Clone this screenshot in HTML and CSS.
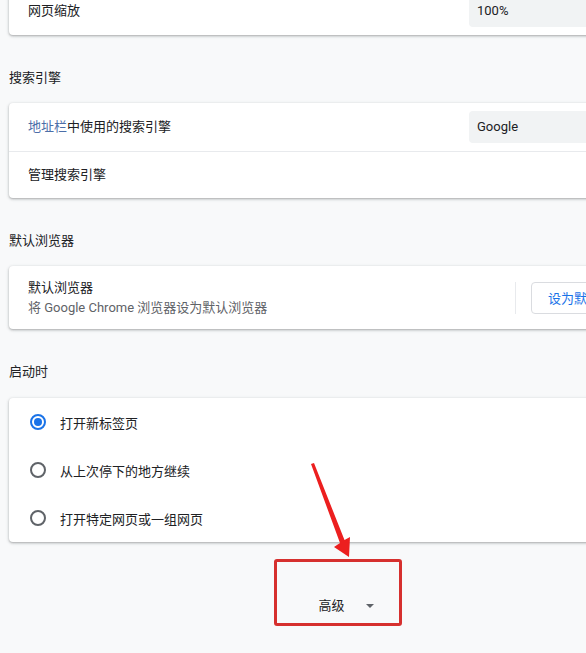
FILE: index.html
```html
<!DOCTYPE html>
<html>
    <head>
        <meta charset="utf-8">
        <title>设置</title>
        <link rel="stylesheet" href="styles.css">
    </head>
    <body>
        <div class="page">
            <div class="card first-card">
                <div class="row">
                    <span class="label">网页缩放</span>
                    <div class="select">100%</div>
                </div>
            </div>

            <h2 class="section-title">搜索引擎</h2>
            <div class="card">
                <div class="row">
                    <span class="label"><span class="link">地址栏</span>中使用的搜索引擎</span>
                    <div class="select">Google</div>
                </div>
                <div class="row divided">
                    <span class="label">管理搜索引擎</span>
                </div>
            </div>

            <h2 class="section-title">默认浏览器</h2>
            <div class="card">
                <div class="row tall">
                    <div class="label two-line">
                        <div>默认浏览器</div>
                        <div class="secondary">将 Google Chrome 浏览器设为默认浏览器</div>
                    </div>
                    <div class="separator"></div>
                    <button class="action-button">设为默认选项</button>
                </div>
            </div>

            <h2 class="section-title">启动时</h2>
            <div class="card startup-card">
                <div class="radio-row">
                    <span class="radio checked"></span>
                    <span>打开新标签页</span>
                </div>
                <div class="radio-row">
                    <span class="radio"></span>
                    <span>从上次停下的地方继续</span>
                </div>
                <div class="radio-row">
                    <span class="radio"></span>
                    <span>打开特定网页或一组网页</span>
                </div>
            </div>

            <div class="advanced">
                <span>高级</span>
                <span class="caret"></span>
            </div>

            <!-- annotation drawn over the screenshot -->
            <svg class="annotation-arrow" width="586" height="653" viewBox="0 0 586 653">
                <polygon points="311,464 314,463 344.5,540 350,537 349,557 334,547 340,543" fill="#ec1f1f"/>
            </svg>
            <div class="annotation-box"></div>
        </div>
    </body>
</html>
```

FILE: styles.css
```css
* {
    box-sizing: border-box;
}

html, body {
    margin: 0;
    padding: 0;
    width: 586px;
    height: 653px;
    overflow: hidden;
    background: #f8f9fa;
}

body {
    font-family: Roboto, "Noto Sans CJK SC", sans-serif;
    font-size: 13px;
    color: #202124;
}

.page {
    position: relative;
    display: flow-root;
    height: 653px;
    padding-left: 9px;
}

.card {
    width: 674px;
    background: #fff;
    border-radius: 4px;
    box-shadow: 0 1px 2px rgba(60, 64, 67, 0.3), 0 1px 3px 1px rgba(60, 64, 67, 0.12);
}

.first-card {
    margin-top: -13px;
}

.row {
    display: flex;
    align-items: center;
    height: 48px;
    padding: 0 19px;
}

.row.divided {
    border-top: 1px solid #e8eaed;
    height: 47px;
}

.row.tall {
    height: 63px;
}

.label {
    width: 441px;
    flex: none;
    line-height: 20px;
}

.two-line {
    width: 487px;
}

.link {
    color: #4b6ea8;
}

.secondary {
    color: #5f6368;
}

.select {
    width: 190px;
    height: 32px;
    line-height: 32px;
    padding-left: 8px;
    background: #f1f3f4;
    border-radius: 4px;
    color: #202124;
}

.separator {
    width: 1px;
    height: 32px;
    background: #e8eaed;
    margin-right: 15px;
}

.action-button {
    flex: none;
    height: 32px;
    padding: 0 16px;
    border: 1px solid #dadce0;
    border-radius: 4px;
    background: #fff;
    color: #1a73e8;
    font-family: Roboto, "Noto Sans CJK SC", sans-serif;
    font-size: 13px;
}

.section-title {
    margin: 33px 0 15px;
    font-size: 13px;
    font-weight: normal;
    line-height: 20px;
}

.startup-card {
    margin-top: 16px;
}

.radio-row {
    display: flex;
    align-items: center;
    gap: 14px;
    height: 48px;
    padding-left: 21px;
}

.radio {
    width: 16px;
    height: 16px;
    border: 2px solid #5f6368;
    border-radius: 50%;
    position: relative;
}

.radio.checked {
    border-color: #1a73e8;
}

.radio.checked::after {
    content: "";
    position: absolute;
    left: 2px;
    top: 2px;
    width: 8px;
    height: 8px;
    border-radius: 50%;
    background: #1a73e8;
}

.advanced {
    width: 674px;
    display: flex;
    justify-content: center;
    align-items: center;
    gap: 21px;
    margin-top: 54px;
    line-height: 20px;
}

.caret {
    width: 0;
    height: 0;
    border-left: 4px solid transparent;
    border-right: 4px solid transparent;
    border-top: 4px solid #5f6368;
}

.annotation-arrow {
    position: absolute;
    left: 0;
    top: 0;
}

.annotation-box {
    position: absolute;
    left: 274px;
    top: 559px;
    width: 128px;
    height: 67px;
    border: 3px solid #d6302e;
    border-radius: 3px;
}
```
